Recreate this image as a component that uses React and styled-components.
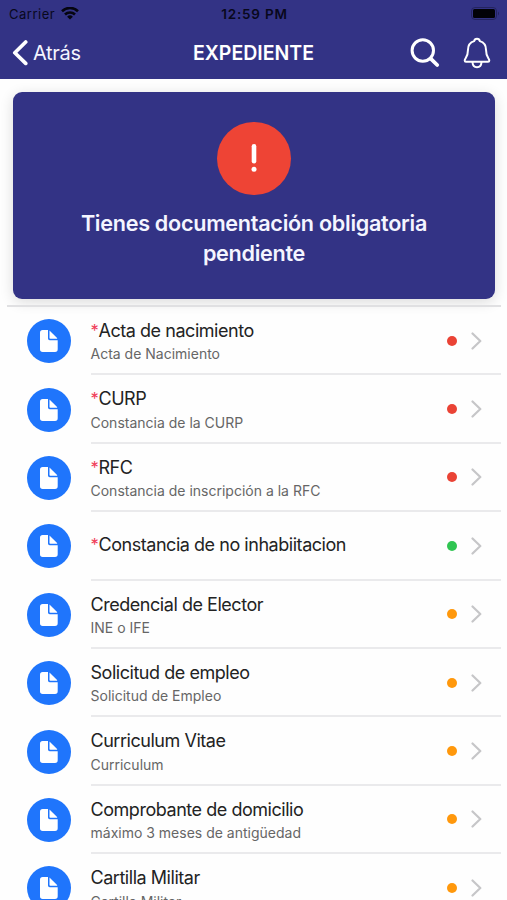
import React from "react";
import styled, { createGlobalStyle } from "styled-components";

const Global = createGlobalStyle`
  *, *::before, *::after { box-sizing: border-box; }
  html, body { margin: 0; background: #fefefe; }
  body { font-family: Inter, "Liberation Sans", sans-serif; color: #232323; height: 900px; overflow: hidden; }
`;

const Screen = styled.div`
  width: 507px;
  height: 900px;
  overflow: hidden;
  display: flex;
  flex-direction: column;
`;

const Header = styled.header`
  flex: none;
  height: 79px;
  background: #333385;
`;

const StatusBar = styled.div`
  height: 27px;
  padding: 0 7px 0 9px;
  display: grid;
  grid-template-columns: 1fr auto 1fr;
  align-items: center;
  color: #08081c;
  font-size: 13px;
  line-height: 27px;
`;

const Carrier = styled.div`
  display: flex;
  align-items: center;
  gap: 6px;
  letter-spacing: 0.5px;
`;

const Clock = styled.div`
  padding-top: 1px;
  font-weight: 600;
  font-size: 13.5px;
  letter-spacing: 0.8px;
`;

const Battery = styled.svg`
  justify-self: end;
  display: block;
`;

const NavBar = styled.nav`
  height: 51px;
  padding: 0 11px;
  display: grid;
  grid-template-columns: 1fr auto 1fr;
  align-items: center;
  color: #fff;
`;

const Back = styled.button`
  display: flex;
  align-items: center;
  gap: 4px;
  padding: 0;
  border: 0;
  background: none;
  color: #f4f5ff;
  font: 400 20px/24px Inter, sans-serif;
  letter-spacing: -0.3px;
`;

const NavTitle = styled.h1`
  margin: 0;
  font-size: 19.5px;
  line-height: 24px;
  font-weight: 600;
  letter-spacing: 0;
`;

const Actions = styled.div`
  display: flex;
  align-items: center;
  justify-content: flex-end;
  gap: 23px;
  padding-right: 5px;
`;

const Icon = styled.svg`
  display: block;
  flex: none;
`;

const Alert = styled.section`
  flex: none;
  margin: 12.5px 12px 6.5px 13px;
  height: 207px;
  padding-top: 30px;
  border-radius: 9px;
  background: #333385;
  box-shadow: 0 3px 14px rgba(0, 0, 0, 0.14);
  display: flex;
  flex-direction: column;
  align-items: center;
`;

const AlertBadge = styled.div`
  width: 73.5px;
  height: 73.5px;
  border-radius: 50%;
  background: #ee4435;
  display: grid;
  place-items: center;
`;

const AlertText = styled.p`
  margin: 12.5px 0 0;
  width: 380px;
  text-align: center;
  color: #f4f5ff;
  font-size: 21.6px;
  line-height: 30.6px;
  font-weight: 600;
  letter-spacing: -0.28px;
`;

const List = styled.ul`
  flex: none;
  margin: 0 6px 0 7px;
  padding: 0;
  list-style: none;
  border-top: 2px solid #e0e0e2;
`;

const Row = styled.li`
  height: 68.4px;
  padding-left: 19.5px;
  display: flex;
  align-items: center;
  gap: 20px;
`;

const DocBadge = styled.div`
  flex: none;
  width: 44px;
  height: 44px;
  border-radius: 50%;
  background: #1f75fc;
  display: grid;
  place-items: center;
`;

const RowBody = styled.div`
  flex: 1;
  height: 100%;
  padding: 1px 19px 0 0;
  border-bottom: 2px solid #eaeaec;
  display: flex;
  align-items: center;
`;

const Texts = styled.div`
  flex: 1;
  padding: ${(p) => (p.$single ? "0 0 1px" : "2px 0 0")};
  white-space: nowrap;
`;

const Title = styled.div`
  font-size: 18px;
  line-height: 24px;
  letter-spacing: -0.46px;
`;

const Required = styled.span`
  color: #f0405a;
  font-size: 16.5px;
  line-height: 1;
  margin-right: 0.2px;
  vertical-align: 1px;
`;

const Subtitle = styled.div`
  margin-top: 0.5px;
  color: #666;
  font-size: 14px;
  line-height: 21px;
`;

const Dot = styled.span`
  flex: none;
  width: 10px;
  height: 10px;
  margin-right: 14px;
  border-radius: 50%;
  background: ${(p) => p.$color};
`;

const RED = "#ea4335";
const GREEN = "#30c552";
const ORANGE = "#ff980c";

const documents = [
  { title: "Acta de nacimiento", sub: "Acta de Nacimiento", required: true, color: RED },
  { title: "CURP", sub: "Constancia de la CURP", required: true, color: RED },
  { title: "RFC", sub: "Constancia de inscripción a la RFC", required: true, color: RED },
  { title: "Constancia de no inhabiitacion", required: true, color: GREEN },
  { title: "Credencial de Elector", sub: "INE o IFE", color: ORANGE },
  { title: "Solicitud de empleo", sub: "Solicitud de Empleo", color: ORANGE },
  { title: "Curriculum Vitae", sub: "Curriculum", color: ORANGE },
  { title: "Comprobante de domicilio", sub: "máximo 3 meses de antigüedad", color: ORANGE },
  { title: "Cartilla Militar", sub: "Cartilla Militar", color: ORANGE },
];

function DocumentRow({ doc }) {
  return (
    <Row>
      <DocBadge>
        <Icon width="18" height="22" viewBox="0 0 18 22" fill="#fff">
          <path d="M2.700 0H8V8.500a1.700 1.700 0 0 0 1.700 1.700H17.700V19.300a2.700 2.700 0 0 1-2.700 2.700H2.700A2.700 2.700 0 0 1 0 19.300V2.700A2.700 2.700 0 0 1 2.700 0Z" />
          <path d="M9.500 .5 17.100 8.100V8.700H10.300a.8 .8 0 0 1-.8-.8Z" />
        </Icon>
      </DocBadge>
      <RowBody>
        <Texts $single={!doc.sub}>
          <Title>
            {doc.required && <Required>*</Required>}
            {doc.title}
          </Title>
          {doc.sub && <Subtitle>{doc.sub}</Subtitle>}
        </Texts>
        <Dot $color={doc.color} />
        <Icon width="11" height="18" viewBox="0 0 11 18" fill="none" stroke="#c6c6c8" strokeWidth="2.200" strokeLinecap="round" strokeLinejoin="round">
          <path d="M1.500 1.500 9.300 9 1.500 16.500" />
        </Icon>
      </RowBody>
    </Row>
  );
}

export default function App() {
  return (
    <Screen>
      <Global />
      <Header>
        <StatusBar>
          <Carrier>
            Carrier
            <Icon width="18" height="14" viewBox="0 0 18 14" fill="none" stroke="#05050f" strokeWidth="2.600">
              <path d="M1 4.200a11.500 11.500 0 0 1 16 0M4 7.500a7.200 7.200 0 0 1 10 0" />
              <path d="M9 12.500 6.100 9.700a4.200 4.200 0 0 1 5.800 0Z" fill="#05050f" stroke="none" />
            </Icon>
          </Carrier>
          <Clock>12:59 PM</Clock>
          <Battery width="29" height="14" viewBox="0 0 29 14">
            <rect x=".5" y=".5" width="25" height="12" rx="3.500" fill="none" stroke="#24245f" />
            <rect x="2" y="2" width="22" height="9" rx="1.500" fill="#020207" />
            <path d="M27 4.500v4q2-2 0-4Z" fill="#24245f" />
          </Battery>
        </StatusBar>
        <NavBar>
          <Back>
            <Icon width="18" height="26" viewBox="0 0 18 26" fill="none" stroke="#fff" strokeWidth="3.700" strokeLinecap="round" strokeLinejoin="round">
              <path d="M14.700 2 3.800 12.700 14.700 23.400" />
            </Icon>
            Atrás
          </Back>
          <NavTitle>EXPEDIENTE</NavTitle>
          <Actions>
            <Icon width="30" height="30" viewBox="0 0 30 30" fill="none" stroke="#fff" strokeLinecap="round">
              <circle cx="12.800" cy="12.500" r="10.700" strokeWidth="3" />
              <path d="M20.700 20.700 27.200 27" strokeWidth="3.800" />
            </Icon>
            <Icon width="28" height="32" viewBox="0 0 28 32" fill="none" stroke="#fff" strokeWidth="2" strokeLinecap="round" strokeLinejoin="round">
              <path d="M14 1.700C12.300 1.700 11.400 2.800 11.200 4.100C7.100 5.300 5 8.700 5 12.700C5 20.200 1.700 21.200 1.700 23.500Q1.700 24.800 3 24.800H25Q26.300 24.800 26.300 23.500C26.300 21.200 23 20.200 23 12.700C23 8.700 20.900 5.300 16.800 4.100C16.600 2.800 15.700 1.700 14 1.700Z" />
              <path d="M9.500 25.200C9.700 28.500 11.500 30.200 14 30.200S18.300 28.500 18.500 25.200" />
            </Icon>
          </Actions>
        </NavBar>
      </Header>
      <Alert>
        <AlertBadge>
          <Icon width="8" height="30" viewBox="0 0 8 30" fill="#fff">
            <rect x="1.700" y="1" width="4.600" height="19.500" rx="2.300" />
            <circle cx="4" cy="26.200" r="2.500" />
          </Icon>
        </AlertBadge>
        <AlertText>Tienes documentación obligatoria pendiente</AlertText>
      </Alert>
      <List>
        {documents.map((doc) => (
          <DocumentRow key={doc.title} doc={doc} />
        ))}
      </List>
    </Screen>
  );
}
